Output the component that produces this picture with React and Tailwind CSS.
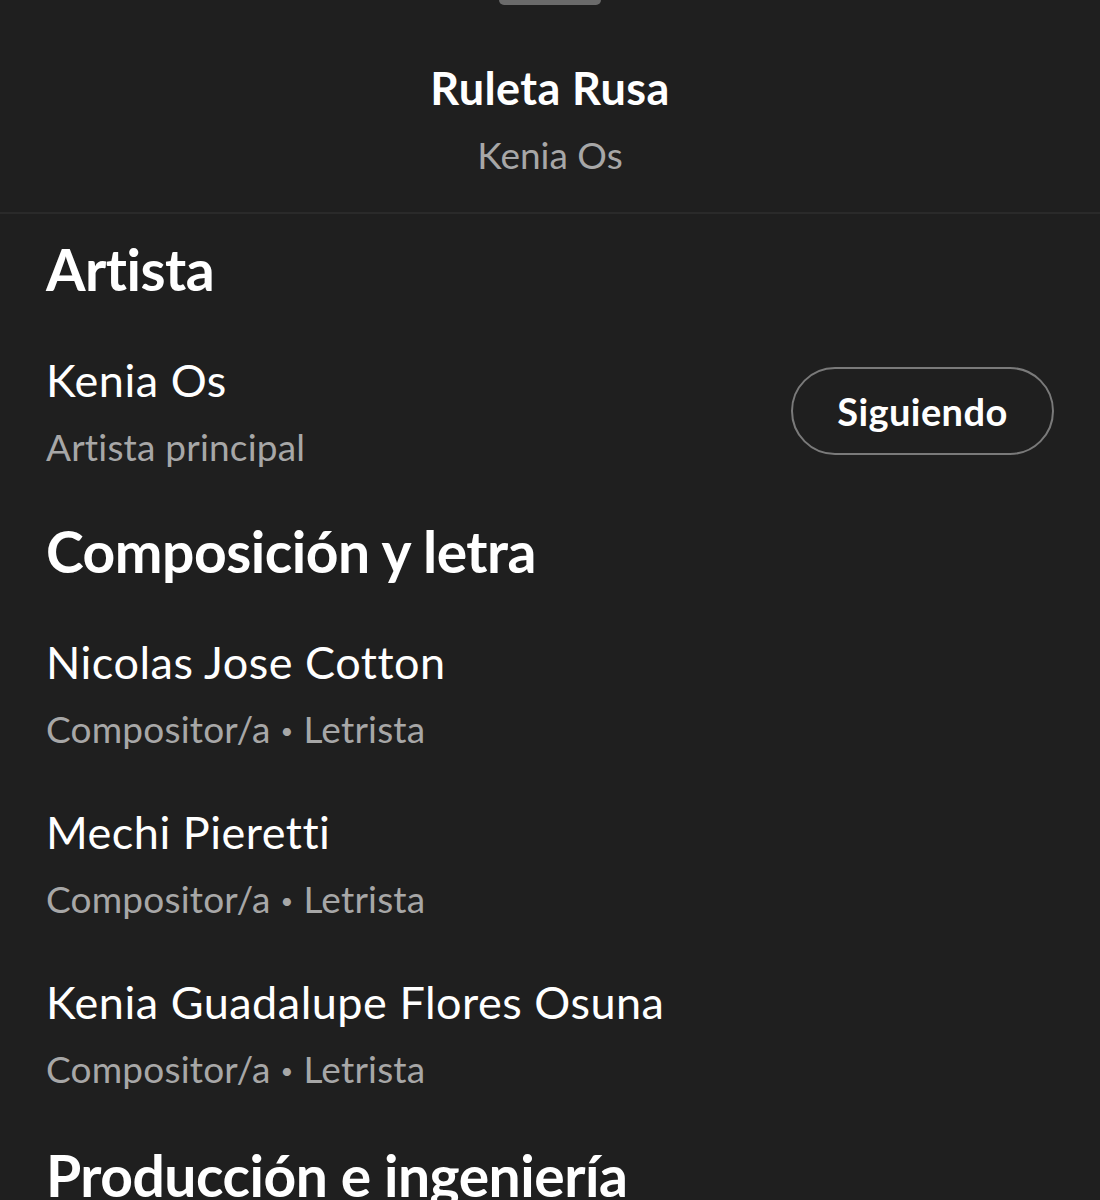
const credits = [
  {
    title: 'Artista',
    people: [{ name: 'Kenia Os', roles: ['Artista principal'], following: true }],
  },
  {
    title: 'Composición y letra',
    people: [
      { name: 'Nicolas Jose Cotton', roles: ['Compositor/a', 'Letrista'] },
      { name: 'Mechi Pieretti', roles: ['Compositor/a', 'Letrista'] },
      { name: 'Kenia Guadalupe Flores Osuna', roles: ['Compositor/a', 'Letrista'] },
    ],
  },
  {
    title: 'Producción e ingeniería',
    people: [],
  },
];

const App = () => {
  return (
    <div
      className="w-[1100px] h-[1200px] overflow-hidden bg-[#1f1f1f] text-white"
      style={{ fontFamily: 'Lato, "Open Sans", sans-serif' }}
    >
      {/* Header */}
      <div className="flex flex-col items-center border-b-2 border-[#2a2a2a]">
        <div className="w-[102px] h-[5px] rounded-b-md bg-[#6a6a6a]" />
        <div className="mt-[57px] text-[45px] leading-[52px] font-bold tracking-[0.4px]">Ruleta Rusa</div>
        <div className="mt-[15px] text-[37px] leading-[52px] text-[#a7a7a7]">Kenia Os</div>
        <div className="h-[31px]" />
      </div>

      {/* Credits */}
      <div className="px-[46px] pt-[22px] flex flex-col gap-[45px]">
        {credits.map((section) => (
          <div key={section.title}>
            <h2 className="text-[57px] leading-[66px] font-bold tracking-[-0.5px]">
              {section.title}
            </h2>
            {section.people.length > 0 && (
              <div className="mt-[52px] flex flex-col gap-[49px]">
                {section.people.map((person) => (
                  <div key={person.name} className="flex items-center justify-between">
                    <div className="flex flex-col">
                      <span className="text-[45px] leading-[52px] tracking-[0.5px]">{person.name}</span>
                      <span className="mt-[15px] text-[37px] leading-[52px] text-[#a7a7a7] tracking-[0.2px]">
                        {person.roles.map((role, i) => (
                          <span key={role}>
                            {i > 0 && <span className="mx-[10px] text-[22px] align-[4px]">•</span>}
                            {role}
                          </span>
                        ))}
                      </span>
                    </div>
                    {person.following && (
                      <button className="mb-[5px] w-[263px] h-[88px] rounded-full border-2 border-[#7a7a7a] text-[38px] font-bold tracking-[0.4px]">
                        Siguiendo
                      </button>
                    )}
                  </div>
                ))}
              </div>
            )}
          </div>
        ))}
      </div>
    </div>
  );
};

export default App;
